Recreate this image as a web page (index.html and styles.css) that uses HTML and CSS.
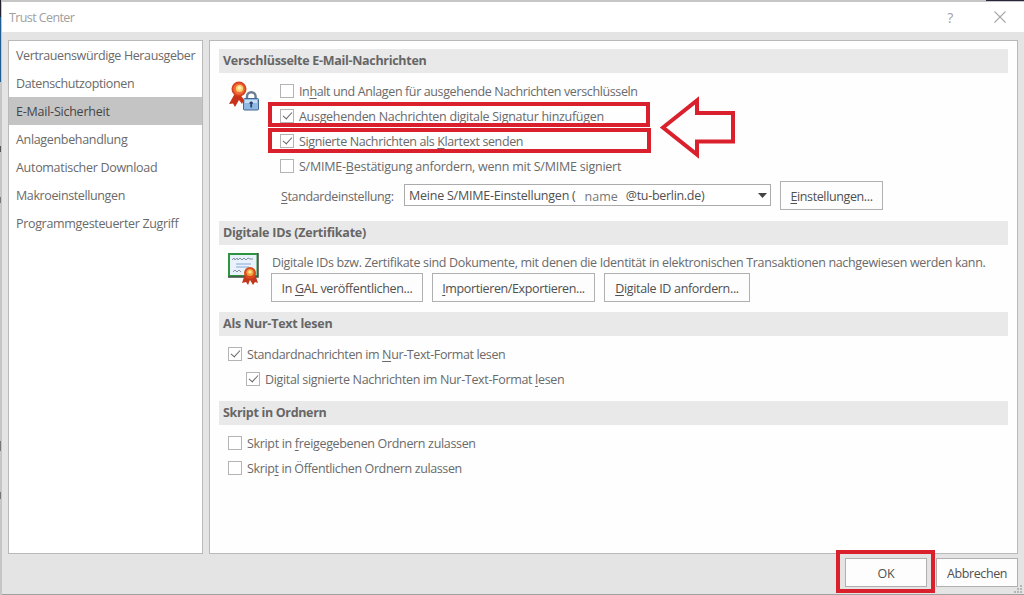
FILE: index.html
```
<!DOCTYPE html>
<html lang="de">
<head>
    <meta charset="UTF-8">
    <meta name="viewport" content="width=device-width, initial-scale=1.0">
    <title>Trust Center</title>
    <link rel="stylesheet" href="styles.css">
</head>
<body>

    <div class="dialog">
        <div class="titlebar">
            <span class="title">Trust Center</span>
            <span class="help">?</span>
            <svg class="close" width="12" height="12" viewBox="0 0 12 12"><path d="M0.5 0.5L11.5 11.5M11.5 0.5L0.5 11.5"/></svg>
        </div>

        <div class="content">
            <ul class="sidebar">
                <li><span class="tighter">Vertrauenswürdige Herausgeber</span></li>
                <li><span class="tighter">Datenschutzoptionen</span></li>
                <li class="active"><span class="wide">E-Mail-Sicherheit</span></li>
                <li><span>Anlagenbehandlung</span></li>
                <li><span class="loose">Automatischer Download</span></li>
                <li><span class="tighter">Makroeinstellungen</span></li>
                <li><span>Programmgesteuerter Zugriff</span></li>
            </ul>

            <div class="main">
                <h2><span class="loose">Verschlüsselte E-Mail-Nachrichten</span></h2>
                <div class="section mail">
                    <svg class="icon" width="34" height="34" viewBox="0 0 34 34">
                        <path d="M7 15L2 24L6 23.5L8 27L12 20L15 24L17 20L13 14Z" fill="#c8321a"/>
                        <circle cx="12" cy="9" r="7.5" fill="#d8401e"/>
                        <circle cx="12" cy="9" r="5.8" fill="#ef6a3c"/>
                        <circle cx="12.5" cy="8.5" r="3.6" fill="#ffd36b"/>
                        <circle cx="12.5" cy="8" r="1.8" fill="#fff1b8"/>
                        <path d="M20 19V16.5a4.3 4.3 0 0 1 8.6 0V19" fill="none" stroke="#6c7f92" stroke-width="2.4"/>
                        <rect x="16.5" y="18.5" width="15" height="11.5" rx="1" fill="#8fb8e4" stroke="#44688f"/>
                        <rect x="18" y="20" width="12" height="3" fill="#c8def5"/>
                        <path d="M24.2 21.5v6M22.6 23h3.2" stroke="#28476c" stroke-width="1.8"/>
                    </svg>
                    <div class="options">
                        <div class="check"><i class="box"></i><span class="tighter">In<u>h</u>alt und Anlagen für ausgehende Nachrichten verschlüsseln</span></div>
                        <div class="check"><i class="box on"></i><span class="loose"><u>A</u>usgehenden Nachrichten digitale Signatur hinzufügen</span><b class="mark mark1"></b></div>
                        <div class="check"><i class="box on"></i><span class="tighter">Signierte Nachrichten als <u>K</u>lartext senden</span><b class="mark mark2"></b></div>
                        <div class="check"><i class="box"></i><span class="wide">S/MIME-<u>B</u>estätigung anfordern, wenn mit S/MIME signiert</span></div>
                        <div class="setting">
                            <label><span class="tighter"><u>S</u>tandardeinstellung:</span></label>
                            <div class="combo">
                                <span class="wide">Meine S/MIME-Einstellungen (</span>
                                <span class="name">name</span>
                                <span class="domain">@tu-berlin.de)</span>
                                <svg width="9" height="5" viewBox="0 0 9 5"><path d="M0 0H9L4.5 5Z" fill="#444"/></svg>
                            </div>
                            <button class="b1"><span class="tighter"><u>E</u>instellungen...</span></button>
                        </div>
                    </div>
                    <svg class="arrow" width="78" height="66" viewBox="0 0 78 66"><path d="M5 32.5L39 5.5V18H75V46.5H39V59.5Z"/></svg>
                </div>

                <h2><span class="wide">Digitale IDs (Zertifikate)</span></h2>
                <div class="section ids">
                    <svg class="icon" width="34" height="34" viewBox="0 0 34 34">
                        <rect x="1" y="1" width="30" height="24" fill="#2f9440"/>
                        <path d="M31 1V25H1" fill="none" stroke="#454f4a" stroke-width="1.5"/>
                        <rect x="3" y="3" width="26.5" height="20" fill="#e9f2fb"/>
                        <path d="M5 8l2-2l1 2l2-2l1 2l2-2l2 2l2-2l2 2l2-2l2 1h3" fill="none" stroke="#8390a5"/>
                        <path d="M9 12h15M9 15h13" stroke="#86a8d5"/>
                        <path d="M6 20l2-2l2 2l2-2l2 2" fill="none" stroke="#8390a5"/>
                        <path d="M18 22L15 31L19 30L21 33L23 28L26 33L28 30L31 31L28 22Z" fill="#c2361b"/>
                        <circle cx="23" cy="21" r="6" fill="#d84a20"/>
                        <circle cx="23" cy="20.5" r="3.6" fill="#f6a03c"/>
                        <circle cx="23" cy="20" r="1.8" fill="#ffe08a"/>
                    </svg>
                    <div class="idbody">
                        <p><span>Digitale IDs bzw. Zertifikate sind Dokumente, mit denen die Identität in elektronischen Transaktionen nachgewiesen werden kann.</span></p>
                        <div class="buttons">
                            <button class="b2"><span>In <u>G</u>AL veröffentlichen...</span></button>
                            <button class="b3"><span class="tighter"><u>I</u>mportieren/Exportieren...</span></button>
                            <button class="b4"><span><u>D</u>igitale ID anfordern...</span></button>
                        </div>
                    </div>
                </div>

                <h2><span class="wide">Als Nur-Text lesen</span></h2>
                <div class="section plain">
                    <div class="check"><i class="box on"></i><span class="tighter">Standardnachrichten im <u>N</u>ur-Text-Format lesen</span></div>
                    <div class="check sub"><i class="box on"></i><span>Digital signierte Nachrichten im Nur-Text-Format <u>l</u>esen</span></div>
                </div>

                <h2><span>Skript in Ordnern</span></h2>
                <div class="section script">
                    <div class="check"><i class="box"></i><span>Skript in <u>f</u>reigegebenen Ordnern zulassen</span></div>
                    <div class="check"><i class="box"></i><span class="tighter">Skrip<u>t</u> in Öffentlichen Ordnern zulassen</span></div>
                </div>
            </div>
        </div>

        <div class="footer">
            <div class="okwrap"><button class="ok"><span class="wide">OK</span></button><b class="mark"></b></div>
            <button class="cancel"><span class="tighter">Abbrechen</span></button>
            <svg class="grip" width="9" height="9" viewBox="0 0 9 9"><path d="M6 0h2v2h-2zM3 3h2v2h-2zM6 3h2v2h-2zM0 6h2v2h-2zM3 6h2v2h-2zM6 6h2v2h-2z"/></svg>
        </div>
    </div>

</body>
</html>
```
FILE: styles.css
```
* {
    box-sizing: border-box;
}

body {
    margin: 0;
    width: 1024px;
    height: 595px;
    overflow: hidden;
    padding: 2px 0 0 2px;
    font-family: "Open Sans", "Noto Sans", sans-serif;
    font-size: 12.5px;
    letter-spacing: -0.33px;
    color: #6a6a6a;
    background:
        linear-gradient(#29253a, #29253a) 986px 0 / 38px 1px no-repeat,
        linear-gradient(#23212f, #23212f) 0 0 / 1px 17px no-repeat,
        linear-gradient(#1c5d94, #1c5d94) 0 17px / 1px 65px no-repeat,
        linear-gradient(#555, #555) 0 146px / 1px 6px no-repeat,
        linear-gradient(#777, #777) 0 197px / 1px 6px no-repeat,
        linear-gradient(#777, #777) 0 441px / 1px 10px no-repeat,
        linear-gradient(#777, #777) 0 492px / 1px 7px no-repeat,
        #c6c6c6;
}

h2, p, ul {
    margin: 0;
    padding: 0;
}

span {
    white-space: nowrap;
}

u {
    text-decoration-thickness: 1px;
    text-underline-offset: 1.5px;
}

.tighter {
    letter-spacing: -0.38px;
}

.loose {
    letter-spacing: -0.3px;
}

.wide {
    letter-spacing: -0.23px;
}

.dialog {
    width: 1022px;
    height: 593px;
    background: #e4e4e4;
    border-bottom: 1px solid #a0a0a0;
}

.titlebar {
    display: flex;
    align-items: center;
    height: 30px;
    padding: 0 18px 0 7px;
    background: #fff;
    color: #a0a0a0;
}

.title {
    flex: 1;
    letter-spacing: -0.6px;
}

.help {
    font-size: 14px;
    margin-right: 41px;
}

.close {
    fill: none;
    stroke: #a8a8a8;
    stroke-width: 1.1;
}

.content {
    display: flex;
    gap: 6px;
    padding: 8px 0 0 6px;
}

.sidebar {
    width: 195px;
    height: 514px;
    list-style: none;
    background: #fff;
    border: 1px solid #b9b9b9;
}

.sidebar li {
    display: flex;
    align-items: center;
    height: 28px;
    padding-left: 7px;
}

.sidebar .active {
    background: #c4c4c4;
    color: #444;
}

.main {
    width: 809px;
    height: 514px;
    padding: 8px 9px;
    background: #fefefe;
    border: 1px solid #b9b9b9;
}

h2 {
    display: flex;
    align-items: center;
    height: 24px;
    padding: 0 0 1px 4px;
    background: #e9e9e9;
    font-size: 12.5px;
    font-weight: 700;
    color: #666;
}

.section {
    position: relative;
    display: flex;
}

.mail {
    height: 148px;
    padding: 5px 0 0 8px;
}

.ids {
    height: 67px;
    padding: 5px 0 0 8px;
}

.plain, .script {
    flex-direction: column;
    padding: 5px 0 0 9px;
}

.plain {
    height: 65px;
}

.icon {
    flex: none;
    margin-top: 2px;
}

.options {
    padding-left: 19px;
}

.check {
    position: relative;
    display: flex;
    align-items: center;
    gap: 5px;
    height: 25.2px;
}

.check span {
    padding-top: 1px;
}

.sub {
    margin-left: 18px;
}

.box {
    position: relative;
    width: 14px;
    height: 14px;
    border: 1px solid #b4b4b4;
    background: #fff;
}

.on::after {
    content: "";
    position: absolute;
    left: 2px;
    top: 2px;
    width: 8px;
    height: 4px;
    border-left: 1.8px solid #666;
    border-bottom: 1.8px solid #666;
    transform: rotate(-48deg);
}

/* red annotation frames */
.mark {
    position: absolute;
    border: 4px solid #d9202c;
}

.mark1, .mark2 {
    left: -12px;
    top: -1px;
    width: 382px;
    height: 25px;
}

.mark2 {
    top: 0;
    width: 383px;
}

.arrow {
    position: absolute;
    left: 439px;
    top: 22px;
    fill: #fefefe;
    stroke: #d9202c;
    stroke-width: 4;
}

.setting {
    display: flex;
    align-items: center;
    height: 29px;
    margin-top: 2px;
}

.setting label {
    width: 124px;
    padding: 2px 0 0 1px;
}

.combo {
    display: flex;
    align-items: center;
    width: 367px;
    height: 22px;
    padding: 1px 4px 0;
    margin-right: 9px;
    border: 1px solid #ababab;
    background: #fff;
    color: #505050;
}

.combo svg {
    margin-left: auto;
    margin-right: -1px;
}

.name {
    margin: 1px 8px 0 9px;
    letter-spacing: 0;
    color: #777;
}

.domain {
    letter-spacing: -0.3px;
}

button {
    display: flex;
    align-items: center;
    justify-content: center;
    height: 29px;
    padding: 2px 0 0;
    font: inherit;
    letter-spacing: inherit;
    color: #505050;
    background: #fdfdfd;
    border: 1px solid #b0b0b0;
}

.b1 { width: 103px; }
.b2 { width: 152px; }
.b3 { width: 163px; }
.b4 { width: 146px; }

.idbody {
    padding-left: 10px;
}

.idbody p {
    display: flex;
    align-items: center;
    height: 23px;
    padding: 1px 0 0 1px;
}

.buttons {
    display: flex;
    gap: 9px;
}

.footer {
    position: relative;
    display: flex;
    gap: 9px;
    padding: 4px 0 0 843px;
}

.okwrap {
    position: relative;
}

.okwrap .mark {
    left: -9px;
    top: -8px;
    width: 99px;
    height: 43px;
}

.ok, .cancel {
    width: 82px;
}

.grip {
    position: absolute;
    right: 1px;
    top: 31px;
    fill: #b5b5b5;
}
```
